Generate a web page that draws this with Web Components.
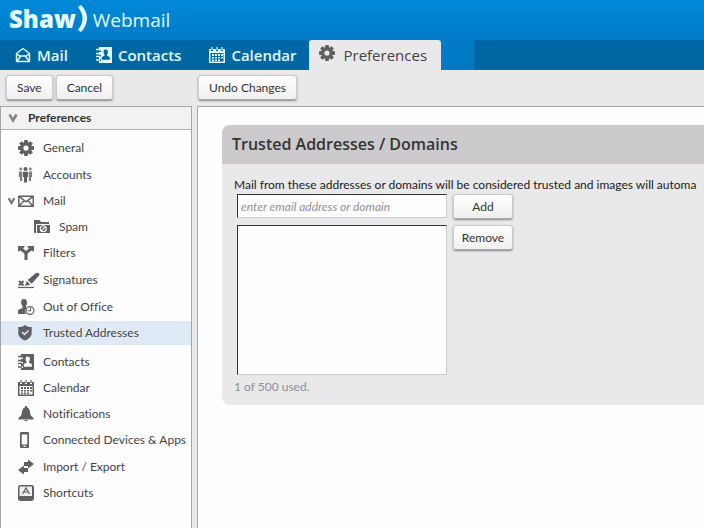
<!DOCTYPE html>
<html lang="en">
<head>
<meta charset="utf-8">
<title>Shaw Webmail - Preferences</title>
<style>
html, body { height: 100%; margin: 0; }
body { background: #e9e8eb; color: #333; font: 12px/16px Lato, "Open Sans", sans-serif; font-variant-ligatures: none; overflow: hidden; }
</style>
</head>
<body>
<webmail-app></webmail-app>
<script>
const TOOTH = '<path d="M6.300 0h3.400l.5 3.500H5.800z"';
const ICONS = {
  mailOpen: '<path d="M1.500 14.500v-8L8 1.500l6.500 5v8zM1.500 6.500L4.500 9h7l3-2.500M1.500 14.500l4-5M14.500 14.500l-4-5" fill="none" stroke="currentColor" stroke-width="1.400" stroke-linejoin="round"/>',
  contacts: '<path fill-rule="evenodd" fill="currentColor" d="M3 0h13v16H3v-2h2v-1.500H3v-3h2V8H3V5h2V3.500H3zM9.500 2.500C7.700 2.500 7.400 4 7.600 5.500c.1 1 .5 1.600.9 2v1.200L5.800 10v2.800h8V10l-2.800-1.300V7.500c.6-.5.9-1.200.9-2 .2-1.700-.6-3-2.400-3z"/><path d="M0 2.500h4M0 6.500h4M0 9.500h4M0 13h4" stroke="currentColor" stroke-width="1.300"/>',
  calendar: '<path fill-rule="evenodd" fill="currentColor" d="M0 2h2v2h2V2h3v2h2V2h3v2h2V2h2v14H0zM1.500 6v8.500h13V6z"/><path d="M3 0v3M8 0v3M13 0v3" stroke="currentColor" stroke-width="1.200"/><path fill="currentColor" d="M3 7h2v2H3zM6 7h2v2H6zM9 7h2v2H9zM12 7h2v2h-2zM3 10h2v1.500H3zM6 10h2v1.500H6zM9 10h2v1.500H9zM12 10h2v1.500h-2zM3 12.500h2V14H3zM6 12.500h2V14H6zM9 12.500h2V14H9z"/>',
  gear: `<g fill="currentColor">${[0, 45, 90, 135, 180, 225, 270, 315].map(a => `${TOOTH} transform="rotate(${a} 8 8)"/>`).join('')}</g><circle cx="8" cy="8" r="4.200" fill="none" stroke="currentColor" stroke-width="3.200"/>`,
  people: '<g fill="currentColor"><g opacity=".8"><circle cx="2.700" cy="2" r="1.400"/><circle cx="12.300" cy="2" r="1.400"/><path d="M1 4.500h3.200V14H2v-4H.8zM14 4.500h-3.200V14H13v-4h1.200z"/></g><circle cx="7.500" cy="2" r="2"/><path d="M5 4.700h5V10H9v5.500H6V10H5z"/></g>',
  envelope: '<path d="M.8 3.200h14.400v10H.8zM1 3.400l7 5.500 7-5.500M1 13l5-5.200M15 13l-5-5.200" fill="none" stroke="currentColor" stroke-width="1.400"/>',
  spam: '<path fill="currentColor" d="M0 1h5.500L7 3h8v2H2v9H0zM3 6h13v8H3z"/><path d="M2.500 5v9" stroke="#fff" stroke-width="1"/><circle cx="9.300" cy="9.800" r="3" fill="none" stroke="#fff" stroke-width="1.100"/><path d="M7.300 11.800l4-4" stroke="#fff" stroke-width="1.200"/>',
  filter: '<path d="M3 3.500C4 5.500 8 6 8 9.500V15M13 3.500C12 5.500 8 6 8 9.500" fill="none" stroke="currentColor" stroke-width="3"/><path fill="currentColor" d="M0 1h7L5.500 3 4 5 0 6.500zM16 1H9l1.500 2L12 5l4 1.500z"/>',
  signature: '<path d="M1 9l4.500 4.500M5.500 9L1 13.500" stroke="currentColor" stroke-width="2"/><path d="M0 15.500h16" stroke="currentColor" stroke-width="1.200"/><path fill="currentColor" d="M7 14l1.700-5 3.600 3.600zM9.700 8L18 1q3.500-1 3.500 2L13.700 11.700z"/>',
  away: '<path fill="currentColor" d="M6 0C3.500 0 2.700 2 3.200 4.500c.2 1 .7 2 1.300 2.500v2L0 11v4h8a4.700 4.700 0 0 1 1-6L8 8.500V7c.6-.7.9-1.500 1-2.500C9.300 2 8.500 0 6 0z"/><circle cx="12" cy="11.500" r="3.900" fill="#fff" stroke="currentColor" stroke-width="1.200"/><path d="M12.500 8.800v3H9.700" fill="none" stroke="currentColor" stroke-width="1.100"/>',
  shield: '<path fill="currentColor" d="M7 0c2 1.600 4 2.200 6.700 2V8c0 3.500-3 6-6.700 7.500C3.300 14 .3 11.500.3 8V2C3 2.200 5 1.600 7 0z"/><path d="M4 7l2.500 2.500L10.500 5.500" fill="none" stroke="#e5eefa" stroke-width="1.400"/>',
  bell: '<path fill="currentColor" d="M6.500 1.500h3C12.500 3 12 8 12.800 9.500L15.500 12v1.500H.5V12l2.700-2.500C4 8 3.500 3 6.500 1.500zM7 0h2v3H7zM6 14h4l-2 1.500z"/>',
  phone: '<path fill="currentColor" fill-rule="evenodd" d="M3 0h7q1 0 1 1v14q0 1-1 1H3q-1 0-1-1V1q0-1 1-1zM3.700 2.500v10h5.600v-10zM5.500 13.500V15h2v-1.500z"/>',
  transfer: '<path fill="currentColor" d="M10 .5l6 4.500-6 4.500V7H6V3h4zM6 6.500V9h4v4H6v2.500L0 11z"/>',
  keycap: '<rect x=".6" y=".6" width="14.800" height="14.800" rx="1.800" fill="currentColor" stroke="currentColor" stroke-width="1.200"/><path d="M2 1.500h12v9.500H1.500V2z" fill="#eee"/><path d="M4.500 9L8 3l3.500 6M6 7h4" fill="none" stroke="currentColor" stroke-width="1.200"/>',
  chevron: '<path d="M4.500 4.500L8 10.500l3.500-6" fill="none" stroke="currentColor" stroke-width="2.600"/>'
};

function define(name, render) {
  customElements.define(name, class extends HTMLElement {
    constructor() {
      super();
      this.attachShadow({ mode: 'open' });
    }
    connectedCallback() {
      this.shadowRoot.innerHTML = render(this);
    }
  });
}

define('ui-icon', el => `
  <style>
    :host { display: block; flex: none; width: 16px; height: 16px; }
    svg { display: block; width: 100%; height: 100%; overflow: visible; }
  </style>
  <svg viewBox="0 0 16 16" aria-hidden="true">${ICONS[el.getAttribute('name')]}</svg>`);

define('push-button', el => `
  <style>
    :host { display: block; }
    button { display: block; width: 100%; height: 25px; padding: 0 10px; border: 1px solid #ccc; border-bottom-color: #aaa;
      border-radius: 3px; background: linear-gradient(#fff, #f0eff1); box-shadow: 0 1px 2px #888;
      color: #333; font: inherit; white-space: nowrap; }
    :host([fill]) button { padding: 0; }
  </style>
  <button type="button"><slot></slot></button>`);

define('nav-tab', el => `
  <style>
    :host { display: block; background: #0067a4; color: #e2fbff; font: 600 15px/20px "Open Sans", sans-serif; }
    :host([active]) { background: #e9e8eb; color: #444; font-weight: 400; border-radius: 3px 3px 0 0; }
    a { display: flex; align-items: center; gap: 6px; height: 30px; padding: 0 13px 0 15px; color: inherit; text-decoration: none; }
    :host([active]) a { gap: 8px; padding: 0 14px 0 10px; }
    :host([active]) ui-icon { color: #606063; margin-bottom: 4px; }
  </style>
  <a href="#"><ui-icon name="${el.getAttribute('icon')}"></ui-icon><slot></slot></a>`);

define('app-header', () => `
  <style>
    :host { display: block; background: linear-gradient(#0089d8, #007bc5 40px, #0079c4); font-family: "Open Sans", sans-serif; }
    .brand { display: flex; align-items: center; height: 40px; padding-left: 9px; color: #e4fcff; }
    .name { padding-bottom: 3px; font-size: 24px; line-height: 36px; font-weight: 800; }
    .arc { width: 9px; height: 27px; margin: 0 6px 4px 2px; }
    .product { font-size: 19px; line-height: 40px; }
    nav { display: flex; height: 30px; }
    .rest { flex: 1; margin-left: 33px; background: #0067a4; }
  </style>
  <div class="brand">
    <span class="name">Shaw</span>
    <svg class="arc" viewBox="0 0 9 27" aria-hidden="true"><path d="M0 2L3 0C11 8 11 18 3 27L0 25C6 17 6 10 0 2z" fill="currentColor"/></svg>
    <span class="product">Webmail</span>
  </div>
  <nav aria-label="Main">
    <nav-tab icon="mailOpen">Mail</nav-tab>
    <nav-tab icon="contacts">Contacts</nav-tab>
    <nav-tab icon="calendar">Calendar</nav-tab>
    <nav-tab icon="gear" active>Preferences</nav-tab>
    <div class="rest"></div>
  </nav>`);

define('pref-item', el => `
  <style>
    :host { display: block; color: #444; }
    a { display: flex; align-items: center; gap: 9px; height: 24px; padding-left: 17px; color: inherit; text-decoration: none; white-space: nowrap; }
    :host([roomy]) a { height: 25px; }
    :host([nested]) a { height: 23px; padding-left: 33px; }
    :host([open]) a { padding-left: 4px; gap: 0; }
    :host([open]) .label { padding-left: 9px; }
    :host([spaced]) { padding-top: 3px; }
    :host([selected]) { background: #e0eaf7; }
    ui-icon { color: #606063; }
    .twist { width: 13px; color: #777; }
  </style>
  <a href="#">${el.hasAttribute('open') ? '<ui-icon class="twist" name="chevron"></ui-icon>' : ''}<ui-icon name="${el.getAttribute('icon')}"></ui-icon><span class="label"><slot></slot></span></a>`);

define('pref-sidebar', () => `
  <style>
    :host { display: block; box-sizing: border-box; border: 1px solid #a5a5a8; border-bottom: 0; background: #fdfcfe; }
    h2 { display: flex; align-items: center; gap: 7px; height: 22px; margin: 0; padding-left: 4px; border-bottom: 1px solid #b5b5b8;
      background: #f2f1f4; font-size: 12px; line-height: 16px; font-weight: 700; }
    h2 ui-icon { color: #858588; }
    nav { display: grid; gap: 2px; padding-top: 5px; }
  </style>
  <h2><ui-icon name="chevron"></ui-icon>Preferences</h2>
  <nav aria-label="Preferences">
    <pref-item icon="gear" roomy>General</pref-item>
    <pref-item icon="people" roomy>Accounts</pref-item>
    <pref-item icon="envelope" open>Mail</pref-item>
    <pref-item icon="spam" nested>Spam</pref-item>
    <pref-item icon="filter" roomy>Filters</pref-item>
    <pref-item icon="signature" roomy>Signatures</pref-item>
    <pref-item icon="away" roomy>Out of Office</pref-item>
    <pref-item icon="shield" selected>Trusted Addresses</pref-item>
    <pref-item icon="contacts" spaced>Contacts</pref-item>
    <pref-item icon="calendar">Calendar</pref-item>
    <pref-item icon="bell">Notifications</pref-item>
    <pref-item icon="phone">Connected Devices &amp; Apps</pref-item>
    <pref-item icon="transfer" roomy>Import / Export</pref-item>
    <pref-item icon="keycap">Shortcuts</pref-item>
  </nav>`);

define('settings-card', () => `
  <style>
    :host { display: block; border-radius: 8px 0 0 8px; background: #e9e8ea; overflow: hidden; }
    h1 { margin: 0; padding: 8px 10px 9px; background: #cccacd; font: 600 16px/22px "Open Sans", sans-serif; }
    .body { padding: 13px 0 10px 12px; }
  </style>
  <h1><slot name="title"></slot></h1>
  <div class="body"><slot></slot></div>`);

define('trusted-form', () => `
  <style>
    :host { display: block; }
    label { display: block; color: #222; white-space: nowrap; }
    .fields { display: grid; grid-template-columns: 210px 60px; gap: 6px; align-items: start; padding: 1px 0 4px 3px; }
    input, select { box-sizing: border-box; width: 100%; margin: 0; border: 1px solid #ccc; border-top-color: #333; border-left-color: #333;
      border-radius: 0; background: #fdfcfe; color: #333; font: inherit; outline: 0; }
    input { height: 24px; padding: 0 3px; }
    input::placeholder { color: #909094; font-style: italic; opacity: 1; }
    select { display: block; height: 150px; }
    p { margin: 0; color: #909094; }
  </style>
  <label for="address">Mail from these addresses or domains will be considered trusted and images will automa</label>
  <div class="fields">
    <input id="address" type="text" placeholder="enter email address or domain">
    <push-button fill>Add</push-button>
    <select size="8" aria-label="Trusted addresses"></select>
    <push-button fill>Remove</push-button>
  </div>
  <p>1 of 500 used.</p>`);

define('webmail-app', () => `
  <style>
    :host { display: grid; grid-template-rows: auto auto 1fr; height: 100vh; }
    .toolbar, .content { display: grid; grid-template-columns: 192px minmax(0, 1fr); column-gap: 5px; }
    .toolbar { padding: 5px 0 6px; }
    .group { display: flex; gap: 3px; padding-left: 6px; }
    .group.end { padding-left: 1px; }
    main { box-sizing: border-box; border: 1px solid #a5a5a8; border-width: 1px 0 0 1px; padding: 18px 0 0 24px; background: #fdfcfe; overflow: hidden; }
  </style>
  <app-header></app-header>
  <div class="toolbar">
    <div class="group"><push-button>Save</push-button><push-button>Cancel</push-button></div>
    <div class="group end"><push-button>Undo Changes</push-button></div>
  </div>
  <div class="content">
    <pref-sidebar></pref-sidebar>
    <main>
      <settings-card><span slot="title">Trusted Addresses / Domains</span><trusted-form></trusted-form></settings-card>
    </main>
  </div>`);
</script>
</body>
</html>
